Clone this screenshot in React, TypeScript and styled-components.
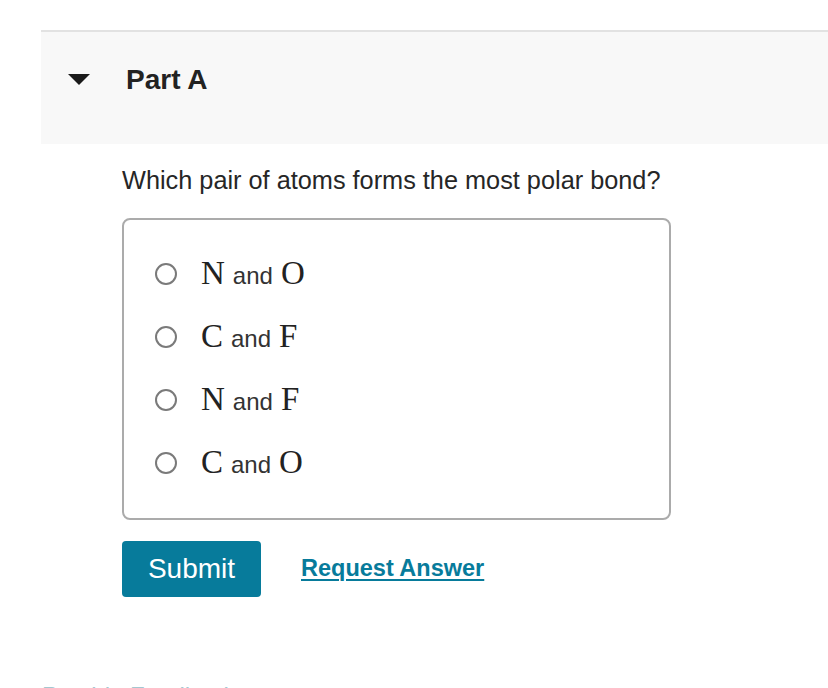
import React from "react";
import styled, { createGlobalStyle } from "styled-components";

const Global = createGlobalStyle`
  html, body { margin: 0; padding: 0; background: #ffffff; }
  body { font-family: "Liberation Sans", Arial, Helvetica, sans-serif; color: #222; }
`;

const Page = styled.div`
  padding: 30px 0 0 41px;
`;

const Section = styled.section`
  border-top: 2px solid #e2e2e2;
`;

const Header = styled.div`
  height: 112px;
  background: #f8f8f8;
  display: flex;
  align-items: center;
  padding-left: 27px;
  gap: 36px;
`;

const Caret = styled.span`
  width: 0;
  height: 0;
  border-left: 11px solid transparent;
  border-right: 11px solid transparent;
  border-top: 11px solid #1a1a1a;
  margin-top: -18px;
`;

const Title = styled.h2`
  margin: 0;
  font-size: 28px;
  font-weight: 700;
  color: #222;
  margin-top: -16px;
`;

const Body = styled.div`
  padding: 22px 0 0 81px;
`;

const Question = styled.p`
  margin: 0;
  font-size: 25.3px;
  line-height: 29px;
  color: #262626;
`;

const OptionsBox = styled.div`
  margin-top: 23px;
  width: 549px;
  box-sizing: border-box;
  border: 2px solid #ababab;
  border-radius: 8px;
  padding: 22px 0 24px 31px;
`;

const Option = styled.label`
  height: 63px;
  display: flex;
  align-items: center;
  gap: 24px;
  cursor: pointer;
`;

const Radio = styled.span`
  width: 22px;
  height: 22px;
  box-sizing: border-box;
  border: 2px solid #7a7a7a;
  border-radius: 50%;
  flex: none;
`;

const OptionText = styled.span`
  font-size: 24px;
  color: #333;
  display: flex;
  align-items: baseline;
  gap: 8px;
`;

const Sym = styled.span`
  font-family: "Liberation Serif", "Times New Roman", serif;
  font-size: 33px;
  color: #222;
`;

const Actions = styled.div`
  margin-top: 21px;
  display: flex;
  align-items: center;
  gap: 40px;
`;

const SubmitButton = styled.button`
  width: 139px;
  height: 56px;
  border: none;
  border-radius: 4px;
  background: #077b9b;
  color: #ffffff;
  font-family: "Liberation Sans", Arial, sans-serif;
  font-size: 28px;
  padding: 0;
`;

const RequestLink = styled.a`
  font-size: 23.5px;
  font-weight: 700;
  color: #077b9b;
  text-decoration: underline;
  text-underline-offset: 3px;
  text-decoration-thickness: 2px;
  margin-top: -2px;
`;

const Feedback = styled.div`
  margin-top: 85px;
  font-size: 24px;
  color: #a4c7d0;
  margin-left: -80px;
`;

const options: [string, string][] = [
  ["N", "O"],
  ["C", "F"],
  ["N", "F"],
  ["C", "O"],
];

export default function App() {
  return (
    <Page>
      <Global />
      <Section>
        <Header>
          <Caret />
          <Title>Part A</Title>
        </Header>
        <Body>
          <Question>Which pair of atoms forms the most polar bond?</Question>
          <OptionsBox>
            {options.map(([a, b], i) => (
              <Option key={i}>
                <Radio />
                <OptionText>
                  <Sym>{a}</Sym>and<Sym>{b}</Sym>
                </OptionText>
              </Option>
            ))}
          </OptionsBox>
          <Actions>
            <SubmitButton>Submit</SubmitButton>
            <RequestLink href="#">Request Answer</RequestLink>
          </Actions>
          <Feedback>Provide Feedback</Feedback>
        </Body>
      </Section>
    </Page>
  );
}
